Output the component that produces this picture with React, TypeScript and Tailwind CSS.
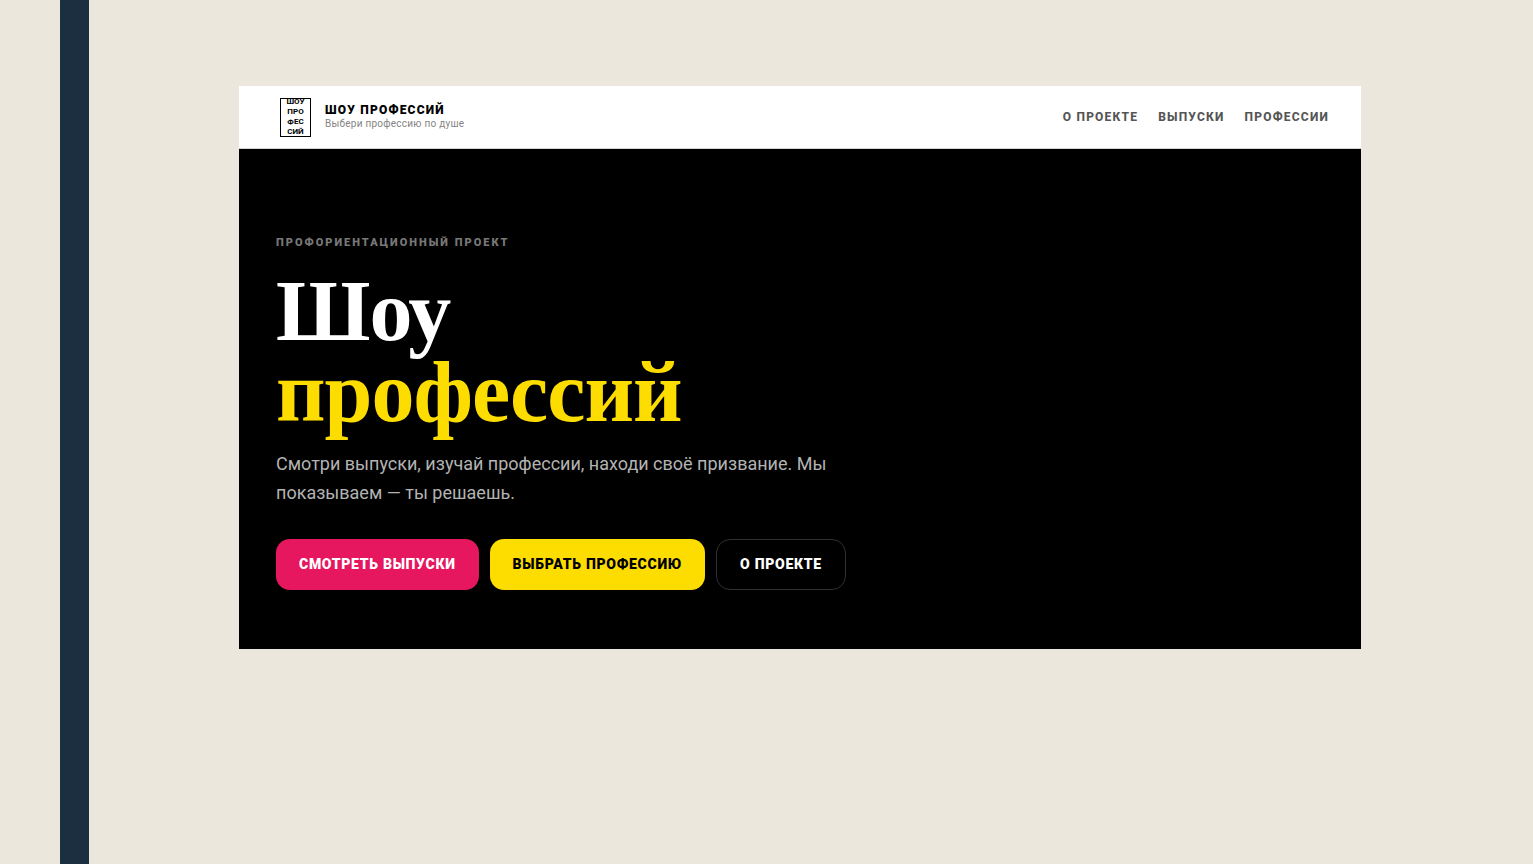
import React from "react";

const navItems = [
  { label: "О проекте", href: "#about" },
  { label: "Выпуски", href: "#episodes" },
  { label: "Профессии", href: "#professions" },
];

const logoRows = ["ШОУ", "ПРО", "ФЕС", "СИЙ"];

function Logo() {
  return (
    <span className="flex h-[39px] w-[31px] flex-col items-center justify-center border border-black text-[8px] leading-[10px] font-bold text-black">
      {logoRows.map((row) => (
        <span key={row}>{row}</span>
      ))}
    </span>
  );
}

function Header() {
  return (
    <header className="flex h-[63px] items-center justify-between border-b border-neutral-300 bg-white pr-8 pl-[41px]">
      <a href="#top" className="flex items-center gap-[14px]">
        <Logo />
        <span className="flex flex-col">
          <span className="text-[12px] leading-[14px] font-black tracking-widest text-black uppercase">
            Шоу профессий
          </span>
          <span className="text-[10px] leading-[14px] tracking-wide text-[#858585]">
            Выбери профессию по душе
          </span>
        </span>
      </a>
      <nav className="flex gap-5">
        {navItems.map((item) => (
          <a
            key={item.href}
            href={item.href}
            className="text-[12px] leading-4 font-extrabold tracking-widest text-[#555555] uppercase"
          >
            {item.label}
          </a>
        ))}
      </nav>
    </header>
  );
}

function Hero() {
  return (
    <section className="bg-black px-[37px] pt-[86px] pb-[59px]">
      <p className="text-[11px] leading-4 font-black tracking-[2px] text-[#777777] uppercase">
        Профориентационный проект
      </p>
      <h1 className="mt-5 font-['Liberation_Serif',serif] text-[86px] leading-[81px] font-bold tracking-[-1px] text-white">
        <span className="block">Шоу</span>
        <span className="block text-[#fddc00]">профессий</span>
      </h1>
      <p className="mt-4 max-w-[572px] text-[18px] leading-[29px] text-[#b3b3b3]">
        Смотри выпуски, изучай профессии, находи своё призвание. Мы показываем — ты решаешь.
      </p>
      <div className="mt-8 flex flex-wrap gap-[11px]">
        <button className="h-[51px] rounded-[14px] bg-[#e6175f] px-[23px] text-[14px] font-black tracking-wider text-white uppercase">
          Смотреть выпуски
        </button>
        <button className="h-[51px] rounded-[14px] bg-[#fddc00] px-[23px] text-[14px] font-black tracking-wider text-black uppercase">
          Выбрать профессию
        </button>
        <button className="h-[51px] rounded-[14px] border border-[#303030] px-[23px] text-[14px] font-black tracking-wider text-white uppercase">
          О проекте
        </button>
      </div>
    </section>
  );
}

export default function App() {
  return (
    <div className="flex min-h-screen bg-[#ebe7dc] pl-[60px] font-[Roboto,sans-serif]">
      <div className="w-[29px] shrink-0 bg-[#1c2f40]" />
      <main className="min-w-0 flex-1 pt-[86px] pr-[172px] pb-16 pl-[150px]">
        <Header />
        <Hero />
      </main>
    </div>
  );
}
